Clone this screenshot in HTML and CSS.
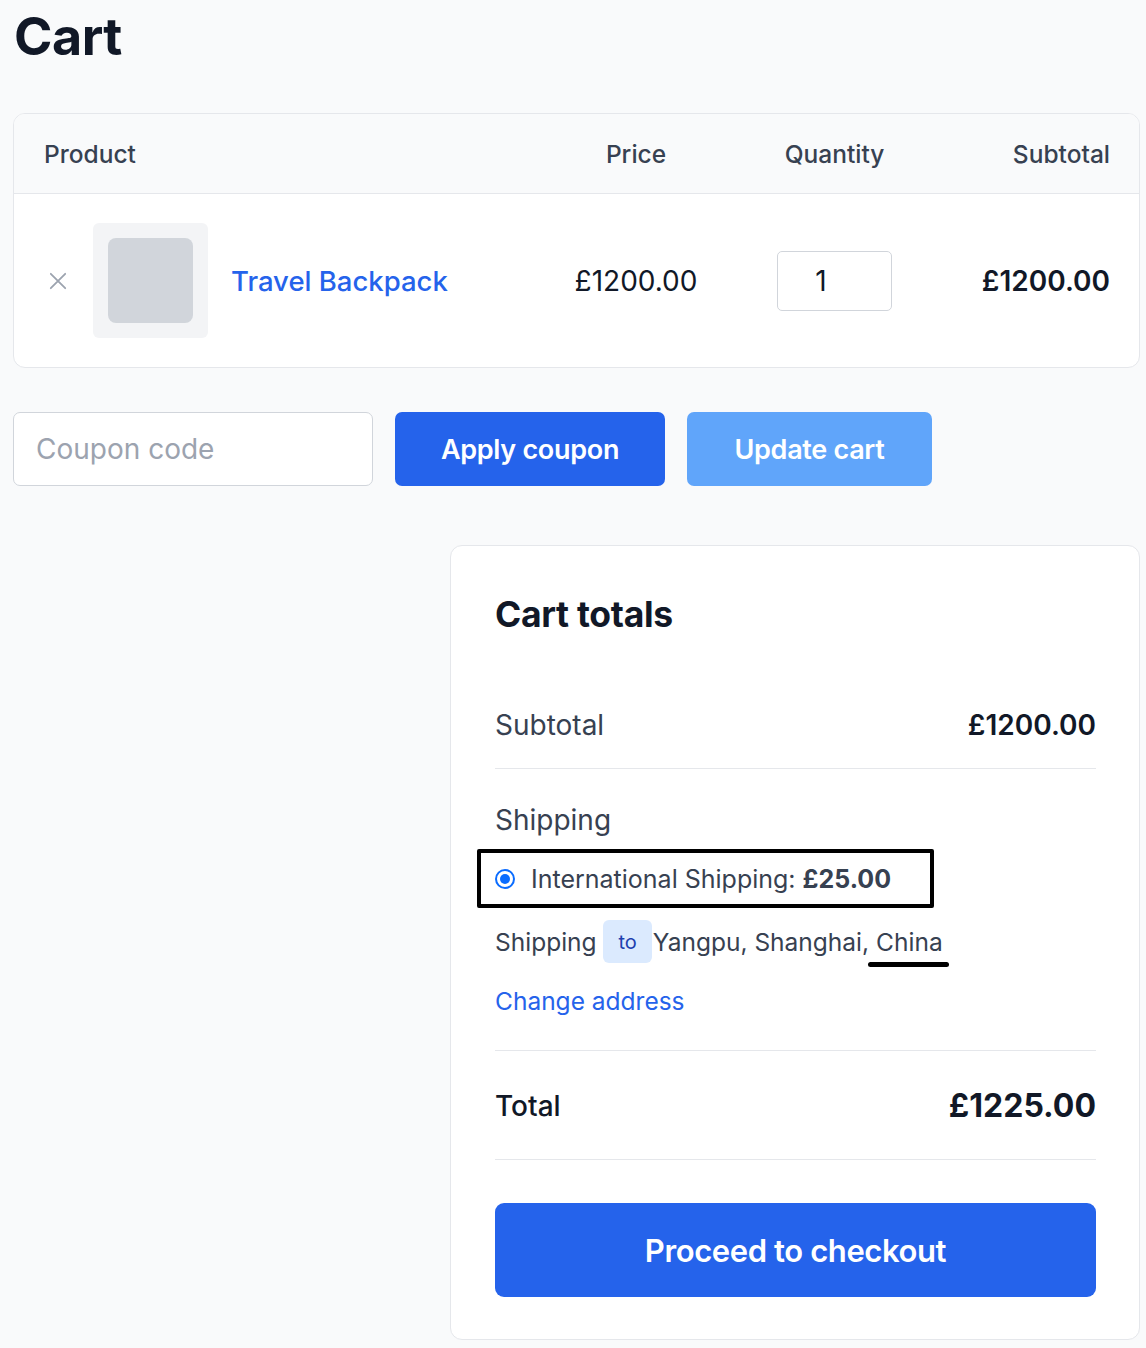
FILE: index.html
```html
<!DOCTYPE html>
<html lang="en">
<head>
<meta charset="utf-8">
<title>Cart</title>
<link rel="stylesheet" href="styles.css">
</head>
<body>
<main class="page">
  <h1 class="title">Cart</h1>

  <section class="cart-table">
    <div class="row head">
      <div class="c-product">Product</div>
      <div class="c-price">Price</div>
      <div class="c-qty">Quantity</div>
      <div class="c-sub">Subtotal</div>
    </div>
    <div class="row item">
      <div class="c-product">
        <button class="remove" aria-label="Remove item">
          <svg viewBox="0 0 20 20" width="20" height="20"><path d="M2 2 L18 18 M18 2 L2 18" stroke="#9ca3af" stroke-width="2" fill="none" stroke-linecap="round"/></svg>
        </button>
        <div class="thumb"><div class="thumb-inner"></div></div>
        <a class="name" href="#">Travel Backpack</a>
      </div>
      <div class="c-price">£1200.00</div>
      <div class="c-qty"><input class="qty" type="text" value="1"></div>
      <div class="c-sub item-sub">£1200.00</div>
    </div>
  </section>

  <div class="actions">
    <input class="coupon" type="text" placeholder="Coupon code">
    <button class="btn btn-primary">Apply coupon</button>
    <button class="btn btn-light">Update cart</button>
  </div>

  <section class="totals">
    <h2 class="totals-title">Cart totals</h2>
    <div class="t-row t-subtotal">
      <span class="t-label">Subtotal</span>
      <span class="t-value">£1200.00</span>
    </div>
    <div class="shipping">
      <div class="t-label">Shipping</div>
      <label class="ship-option">
        <span class="radio"><span class="radio-dot"></span></span>
        <span>International Shipping: <strong>£25.00</strong></span>
      </label>
      <div class="ship-to">Shipping&nbsp;<span class="pill">to</span>Yangpu, Shanghai, <span class="mark">China</span></div>
      <a class="change" href="#">Change address</a>
    </div>
    <div class="t-row t-total">
      <span class="total-label">Total</span>
      <span class="total-value">£1225.00</span>
    </div>
    <button class="checkout">Proceed to checkout</button>
  </section>
</main>
</body>
</html>
```

FILE: styles.css
```css
* { box-sizing: border-box; }
html, body { margin: 0; padding: 0; }
body {
  background: #f9fafb;
  font-family: "Inter", "Liberation Sans", sans-serif;
  color: #111827;
}
.page {
  padding: 11px 6px 8px 13px;
}
.title {
  margin: 0 0 50px 1px;
  font-size: 52px;
  line-height: 52px;
  font-weight: 700;
  letter-spacing: -0.5px;
  color: #111827;
}

/* table */
.cart-table {
  background: #fff;
  border: 1px solid #e5e7eb;
  border-radius: 12px;
  overflow: hidden;
}
.row {
  display: grid;
  grid-template-columns: 1fr 166px 231px 160px;
  align-items: center;
  padding: 0 29px 0 30px;
}
.head {
  height: 80px;
  background: #f9fafb;
  border-bottom: 1px solid #e5e7eb;
  font-size: 24.5px;
  font-weight: 500;
  color: #374151;
}
.item {
  height: 173px;
  font-size: 28px;
  color: #111827;
}
.c-price, .c-qty { text-align: center; }
.c-sub { text-align: right; }
.item-sub { font-weight: 600; }
.c-product {
  display: flex;
  align-items: center;
}
.remove {
  width: 28px;
  height: 28px;
  padding: 0;
  border: 0;
  background: none;
  display: flex;
  align-items: center;
  justify-content: center;
  cursor: pointer;
}
.remove svg { width: 18px; height: 18px; }
.thumb {
  width: 115px;
  height: 115px;
  margin-left: 21px;
  padding: 15px;
  background: #f3f4f6;
  border-radius: 6px;
}
.thumb-inner {
  width: 100%;
  height: 100%;
  background: #d1d5db;
  border-radius: 8px;
}
.name {
  margin-left: 23px;
  color: #2563eb;
  text-decoration: none;
  font-weight: 500;
  font-size: 27.5px;
}
.qty {
  width: 115px;
  height: 60px;
  border: 1px solid #d1d5db;
  border-radius: 5px;
  font-family: inherit;
  font-size: 28px;
  color: #111827;
  text-align: center;
  padding: 0 27px 0 0;
  background: #fff;
}

/* actions */
.actions {
  display: flex;
  gap: 22px;
  margin-top: 44px;
  height: 74px;
}
.coupon {
  width: 360px;
  height: 74px;
  border: 1px solid #d1d5db;
  border-radius: 7px;
  background: #fff;
  padding: 0 22px;
  font-family: inherit;
  font-size: 28px;
  color: #111827;
}
.coupon::placeholder { color: #9ca3af; }
.btn {
  height: 74px;
  border: 0;
  border-radius: 7px;
  color: #fff;
  font-family: inherit;
  font-size: 27px;
  font-weight: 600;
  letter-spacing: -0.3px;
  padding: 0;
  white-space: nowrap;
  cursor: pointer;
}
.btn-primary { background: #2563eb; width: 270px; }
.btn-light { background: #60a5fa; width: 245px; }

/* totals */
.totals {
  width: 690px;
  margin: 59px 0 0 auto;
  background: #fff;
  border: 1px solid #e5e7eb;
  border-radius: 12px;
  padding: 47px 43px 42px 44px;
}
.totals-title {
  margin: 0 0 47px;
  font-size: 35.5px;
  line-height: 43px;
  font-weight: 700;
  color: #111827;
  letter-spacing: -0.3px;
}
.t-row {
  display: flex;
  justify-content: space-between;
  align-items: center;
  border-bottom: 1px solid #e5e7eb;
}
.t-subtotal {
  padding: 24px 0 25px;
  line-height: 36px;
}
.t-label {
  font-size: 28px;
  line-height: 36px;
  color: #374151;
}
.t-value {
  font-size: 28px;
  font-weight: 600;
  color: #111827;
}
.shipping {
  padding: 33px 0 31px;
  border-bottom: 1px solid #e5e7eb;
}
.ship-option {
  display: inline-flex;
  align-items: center;
  margin: 11px 0 0 -18px;
  height: 59px;
  border: 4px solid #000;
  border-radius: 2px;
  padding: 0 39px 0 14px;
  font-size: 25px;
  color: #374151;
}
.ship-option strong { font-weight: 700; }
.radio {
  width: 20px;
  height: 20px;
  border-radius: 50%;
  border: 2px solid #0a6cff;
  display: flex;
  align-items: center;
  justify-content: center;
  margin-right: 16px;
  flex: none;
}
.radio-dot {
  width: 10px;
  height: 10px;
  border-radius: 50%;
  background: #0a6cff;
}
.ship-to {
  display: flex;
  align-items: center;
  height: 43px;
  margin-top: 12px;
  font-size: 24.5px;
  color: #374151;
  white-space: nowrap;
}
.pill {
  display: inline-flex;
  align-items: center;
  height: 43px;
  padding: 0 15px;
  margin-right: 1px;
  background: #dbeafe;
  border-radius: 6px;
  color: #1e40af;
  font-size: 20px;
}
.mark {
  position: relative;
  margin-left: 7px;
}
.mark::after {
  content: "";
  position: absolute;
  left: -8px;
  right: -6px;
  bottom: -10px;
  height: 5px;
  background: #000;
  border-radius: 3px;
}
.change {
  display: block;
  margin-top: 20px;
  font-size: 24.5px;
  line-height: 36px;
  color: #2563eb;
  text-decoration: none;
}
.t-total {
  padding: 37px 0 35px;
  line-height: 36px;
}
.total-label {
  font-size: 28px;
  font-weight: 500;
  color: #111827;
}
.total-value {
  font-size: 32px;
  font-weight: 700;
  color: #111827;
}
.checkout {
  display: block;
  width: 100%;
  height: 94px;
  margin-top: 43px;
  border: 0;
  border-radius: 9px;
  background: #2563eb;
  color: #fff;
  font-family: inherit;
  font-size: 31px;
  font-weight: 600;
  letter-spacing: -0.4px;
  cursor: pointer;
}
```
